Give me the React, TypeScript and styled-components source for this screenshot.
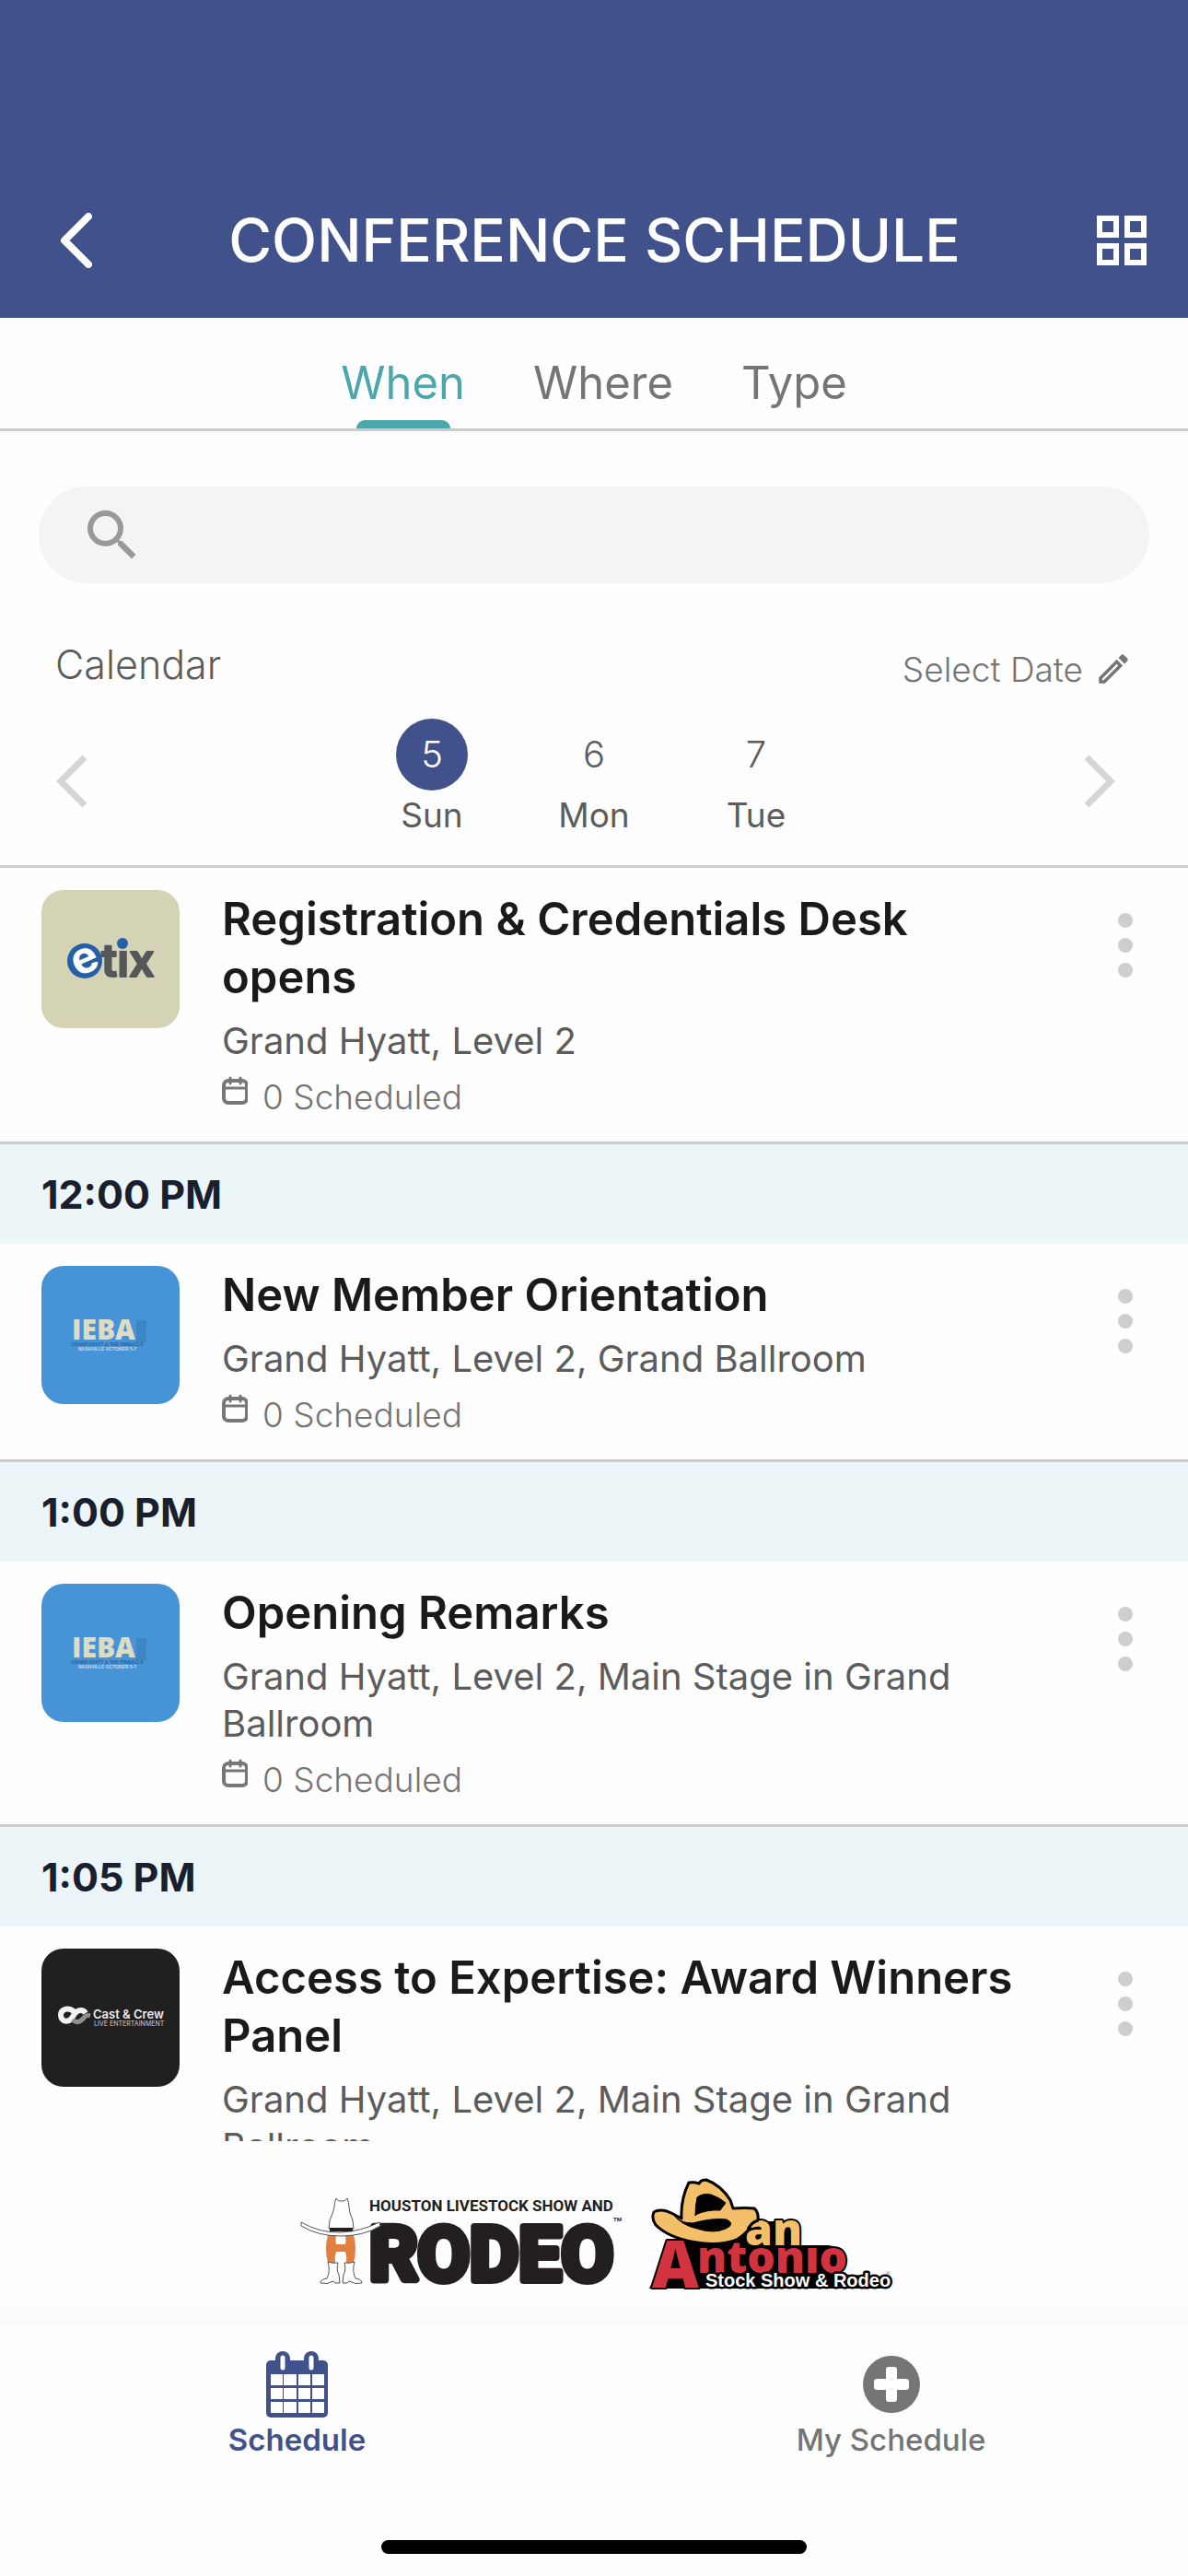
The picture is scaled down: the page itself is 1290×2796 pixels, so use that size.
import React, { useState } from 'react';
import styled, { createGlobalStyle } from 'styled-components';
import { MdOutlineEdit, MdSearch } from 'react-icons/md';

type LogoName = 'ETIX' | 'IEBA' | 'CAST';

type Session = {
  time?: string;
  title: string;
  location: string;
  scheduled: number;
  logo: LogoName;
};

const palette = {
  navy: '#40518b',
  teal: '#4ca7ac',
  line: '#cccccc',
  ink: '#1a1a1a',
  text: '#5c5c5c',
  gray: '#757575',
  timeBg: '#ecf5f7',
};

const tabs = ['When', 'Where', 'Type'];

const days = [
  { date: 5, label: 'Sun' },
  { date: 6, label: 'Mon' },
  { date: 7, label: 'Tue' },
];

const sessions: Session[] = [
  { title: 'Registration & Credentials Desk opens', location: 'Grand Hyatt, Level 2', scheduled: 0, logo: 'ETIX' },
  {
    time: '12:00 PM',
    title: 'New Member Orientation',
    location: 'Grand Hyatt, Level 2, Grand Ballroom',
    scheduled: 0,
    logo: 'IEBA',
  },
  {
    time: '1:00 PM',
    title: 'Opening Remarks',
    location: 'Grand Hyatt, Level 2, Main Stage in Grand Ballroom',
    scheduled: 0,
    logo: 'IEBA',
  },
  {
    time: '1:05 PM',
    title: 'Access to Expertise: Award Winners Panel',
    location: 'Grand Hyatt, Level 2, Main Stage in Grand Ballroom',
    scheduled: 0,
    logo: 'CAST',
  },
];

function ChevronIcon({ flip = false, round = false }: { flip?: boolean; round?: boolean }) {
  return (
    <svg width="36" height="60" viewBox="0 0 36 60" fill="none" stroke="currentColor" aria-hidden="true">
      <path
        d={flip ? 'M4 4L30 30L4 56' : 'M32 4L6 30L32 56'}
        strokeWidth={round ? 8 : 7}
        strokeLinecap={round ? 'round' : 'butt'}
        strokeLinejoin={round ? 'round' : 'miter'}
      />
    </svg>
  );
}

function GridIcon() {
  return (
    <svg width="54" height="54" viewBox="0 0 54 54" fill="none" stroke="currentColor" strokeWidth="6" aria-hidden="true">
      <path d="M3 3h18v18H3zM33 3h18v18H33zM3 33h18v18H3zM33 33h18v18H33z" />
    </svg>
  );
}

function SmallCalendarIcon() {
  return (
    <svg width="28" height="32" viewBox="0 0 28 32" fill="none" stroke="#777777" strokeWidth="4" aria-hidden="true">
      <rect x="2" y="6" width="25" height="24" rx="5" />
      <path d="M2 14h25" strokeWidth="3" />
      <path d="M9 3v6M20 3v6" strokeWidth="3" strokeLinecap="round" />
    </svg>
  );
}

function CalendarIcon() {
  return (
    <svg width="68" height="72" viewBox="0 0 68 72" aria-hidden="true">
      <rect y="10" width="67" height="62" rx="5" fill="currentColor" />
      <rect x="10" width="16" height="25" rx="8" fill="currentColor" />
      <rect x="41" width="16" height="25" rx="8" fill="currentColor" />
      <path d="M18 7v11M49 7v11" stroke="#ffffff" strokeWidth="5" strokeLinecap="round" />
      {[5, 19, 35, 50].map((x) =>
        [25, 40, 55].map((y) => <rect key={`${x}_${y}`} x={x} y={y} width={x === 19 ? 14 : 13} height="12" fill="#ffffff" />),
      )}
    </svg>
  );
}

function PlusCircleIcon() {
  return (
    <svg width="62" height="72" viewBox="0 0 62 72" aria-hidden="true">
      <circle cx="31" cy="36" r="31" fill="currentColor" />
      <path
        d="M28 17h6q3 0 3 3v10h10q3 0 3 3v6q0 3-3 3H37v10q0 3-3 3h-6q-3 0-3-3V42H15q-3 0-3-3v-6q0-3 3-3h10V20q0-3 3-3z"
        fill="#ffffff"
      />
    </svg>
  );
}

function DotsIcon() {
  return (
    <svg width="16" height="70" viewBox="0 0 16 70" fill="#cecece" aria-hidden="true">
      <circle cx="8" cy="8" r="8" />
      <circle cx="8" cy="35" r="8" />
      <circle cx="8" cy="62" r="8" />
    </svg>
  );
}

function EtixLogo() {
  return (
    <svg viewBox="0 0 150 150" role="img" aria-label="etix">
      <rect width="150" height="150" fill="#d5d3b5" />
      <circle cx="47" cy="77" r="19" fill="#2360a5" />
      <g fontFamily="Inter, sans-serif">
        <text x="33" y="90" fontSize="48" fontWeight="700" fill="#ffffff" transform="rotate(-24 47 77)">
          e
        </text>
        <text x="65" y="94" fontSize="49" fontWeight="600" fill="#56575a" stroke="#56575a" strokeWidth="2" strokeLinejoin="round">
          tıx
        </text>
      </g>
      <circle cx="88" cy="58" r="6" fill="#2360a5" />
    </svg>
  );
}

function IebaLogo() {
  return (
    <svg viewBox="0 0 150 150" role="img" aria-label="IEBA">
      <rect width="150" height="150" fill="#4793d8" />
      <rect x="103" y="59" width="11" height="24" fill="#3d86c4" />
      <text x="33" y="80" fontFamily="'Open Sans', sans-serif" fontSize="30" fontWeight="800" fill="#dfdcc4">
        IEBA
      </text>
      <g fontFamily="Liberation Sans, sans-serif" fontWeight="700">
        <text x="32" y="87" fontSize="5" fill="#29649a">
          GRAND HYATT &amp; THE PINNACLE
        </text>
        <text x="40" y="92" fontSize="5" fill="#c5dcec">
          NASHVILLE OCTOBER 5-7
        </text>
      </g>
    </svg>
  );
}

function CastLogo() {
  return (
    <svg viewBox="0 0 150 150" role="img" aria-label="Cast & Crew Live Entertainment">
      <rect width="150" height="150" fill="#221f20" />
      <path d="M35 68C29 63 21 66 21 72C21 80 30 81 34 74C38 66 45 65 48 70" fill="none" stroke="#f2f2f2" strokeWidth="6" />
      <path d="M34 77C39 83 45 77 47 74C49 72 50 72 53 73" fill="none" stroke="#8f8f8f" strokeWidth="5" />
      <g fontFamily="Inter, sans-serif" fill="#ededed">
        <text x="56" y="76" fontSize="13" fontWeight="600">
          Cast &amp; Crew
        </text>
        <text x="57" y="84" fontSize="7" fontWeight="500" fill="#b5b5b5">
          LIVE ENTERTAINMENT
        </text>
      </g>
    </svg>
  );
}

function HoustonLogo() {
  return (
    <svg width="370" height="150" viewBox="-10 -20 370 150" role="img" aria-label="Houston Livestock Show and Rodeo">
      <g fontFamily="Roboto, sans-serif" fontWeight="700" fill="#231f20">
        <text x="81" y="30" fontSize="17">
          HOUSTON LIVESTOCK SHOW AND
        </text>
        <text x="81" y="105" fontSize="82" stroke="#231f20" strokeWidth="8" strokeLinejoin="round">
          RODEO
        </text>
        <text x="346" y="41" fontSize="6">
          TM
        </text>
      </g>
      <path d="M36 56h9q-1 6 0 10h10q1-4 0-10h9q4 15 0 30h-8q1-6-1-12H45q-2 6-1 12h-8q-4-15 0-30z" fill="#e08140" />
      <g fill="#ffffff" stroke="#555555" strokeWidth="1">
        <path d="M45 16q2 4 6 3q4 1 6-3q2 4 2 10q0 5 4 14l1 9H37l1-9q4-9 5-14q0-6 2-10z" />
        <path d="M7 42q21 12 43 11q22-1 42-11l1 4q-18 11-43 11Q25 57 7 46z" />
        <path d="M36 85q5 2 11 1q-2 8 1 13l1 9h-5l-2-2q-7 4-14 2q0-4 7-5q4-8 1-18z" />
        <path d="M54 86q6 1 11-1q-3 10 1 18q7 1 7 5q-7 2-14-2l-2 2h-5l1-9q3-5 1-13z" />
      </g>
      <path d="M38 48h25v4H38z" fill="#231f20" />
    </svg>
  );
}

function SanAntonioLogo() {
  return (
    <svg width="285" height="140" viewBox="0 0 285 140" role="img" aria-label="San Antonio Stock Show & Rodeo">
      <path d="M10 129L34 78L70 70L120 56H172V82H205Q219 84 219 98Q219 108 212 113L262 116Q272 129 258 129z" fill="#000000" />
      <g fontFamily="'Open Sans', sans-serif" fontWeight="800" stroke="#000000" strokeWidth="4" strokeLinejoin="round" paintOrder="stroke">
        <text x="13" y="128" fontSize="70" fill="#d2343f">
          A
        </text>
        <text x="62" y="112" fontSize="48" fill="#d2343f">
          ntonıo
        </text>
        <text x="114" y="82" fontSize="48" fill="#f3bf69">
          an
        </text>
      </g>
      <text
        x="71"
        y="127"
        fontFamily="Liberation Sans, sans-serif"
        fontSize="20"
        fontWeight="700"
        fill="#ffffff"
        stroke="#000000"
        strokeWidth="5"
        strokeLinejoin="round"
        paintOrder="stroke"
      >
        Stock Show &amp; Rodeo
      </text>
      <text x="267" y="115" fontFamily="Liberation Sans, sans-serif" fontSize="6" fill="#555555">
        ®
      </text>
      <g stroke="#000000" strokeWidth="3" strokeLinejoin="round">
        <path
          d="M45 53C44 35 48 24 53 14Q59 13 64 15Q66 11 72 11Q88 17 98 33L101 42Q114 41 124 42Q129 46 128 55Q119 58 117 66Q113 71 105 76C80 86 35 78 17 60Q12 53 15 46Q23 41 36 48z"
          fill="#f3bf69"
        />
        <path d="M60 50Q60 38 62 30Q68 25 77 27Q86 30 93 36Q90 40 87 44Q73 43 60 49z" fill="#000000" strokeWidth="1" />
        <path d="M36 48Q42 58 57 58Q79 52 94 54Q104 59 93 64Q80 70 62 64Q44 60 36 48z" fill="#000000" strokeWidth="1" />
      </g>
    </svg>
  );
}

const logos: Record<LogoName, () => React.JSX.Element> = {
  ETIX: EtixLogo,
  IEBA: IebaLogo,
  CAST: CastLogo,
};

function SessionRow({ session }: { session: Session }) {
  const { time, title, location, scheduled, logo } = session;
  const Logo = logos[logo];
  return (
    <li>
      {time && <TimeHeading>{time}</TimeHeading>}
      <SessionBox>
        <Thumbnail>
          <Logo />
        </Thumbnail>
        <SessionInfo>
          <SessionTitle>{title}</SessionTitle>
          <LocationText>{location}</LocationText>
          <ScheduledLine>
            <SmallCalendarIcon />
            <span>{scheduled} Scheduled</span>
          </ScheduledLine>
        </SessionInfo>
        <MoreButton type="button" aria-label={`Options for ${title}`}>
          <DotsIcon />
        </MoreButton>
      </SessionBox>
    </li>
  );
}

function App() {
  const [activeTab, setActiveTab] = useState('When');
  const [selectedDate, setSelectedDate] = useState(5);

  return (
    <Screen>
      <GlobalStyle />
      <Header>
        <IconButton type="button" aria-label="Back">
          <ChevronIcon round />
        </IconButton>
        <PageTitle>CONFERENCE SCHEDULE</PageTitle>
        <IconButton type="button" aria-label="Menu">
          <GridIcon />
        </IconButton>
      </Header>
      <TabBar role="tablist">
        {tabs.map((tab) => (
          <Tab key={tab} type="button" role="tab" aria-selected={tab === activeTab} $active={tab === activeTab} onClick={() => setActiveTab(tab)}>
            {tab}
          </Tab>
        ))}
      </TabBar>
      <SearchBox>
        <MdSearch size={72} color="#999999" aria-hidden="true" />
        <SearchInput type="search" aria-label="Search sessions" />
      </SearchBox>
      <CalendarHead>
        <CalendarLabel>Calendar</CalendarLabel>
        <SelectDateButton type="button">
          Select Date
          <MdOutlineEdit size={42} aria-hidden="true" />
        </SelectDateButton>
      </CalendarHead>
      <DateStrip>
        <ArrowButton type="button" aria-label="Previous dates">
          <ChevronIcon />
        </ArrowButton>
        <Days>
          {days.map(({ date, label }) => (
            <DayButton key={date} type="button" onClick={() => setSelectedDate(date)}>
              <DayNumber $selected={date === selectedDate}>{date}</DayNumber>
              <DayLabel>{label}</DayLabel>
            </DayButton>
          ))}
        </Days>
        <ArrowButton type="button" aria-label="Next dates">
          <ChevronIcon flip />
        </ArrowButton>
      </DateStrip>
      <SessionList>
        {sessions.map((session) => (
          <SessionRow key={session.title} session={session} />
        ))}
      </SessionList>
      <Sponsors>
        <HoustonLogo />
        <SanAntonioLogo />
      </Sponsors>
      <BottomNav>
        <NavLink href="#schedule" $active>
          <CalendarIcon />
          Schedule
        </NavLink>
        <NavLink href="#my-schedule">
          <PlusCircleIcon />
          My Schedule
        </NavLink>
      </BottomNav>
      <HomeIndicator />
    </Screen>
  );
}

const GlobalStyle = createGlobalStyle`
  * {
    box-sizing: border-box;
  }
  body {
    margin: 0;
    background-color: #ffffff;
    font-family: Inter, 'Open Sans', sans-serif;
  }
  button {
    padding: 0;
    border: none;
    background: none;
    color: inherit;
    font-family: inherit;
    cursor: pointer;
  }
  svg {
    display: block;
    flex-shrink: 0;
  }
`;

const Screen = styled.div`
  display: flex;
  flex-direction: column;
  height: 100vh;
  background-color: #fefefe;
`;

const Header = styled.header`
  display: flex;
  align-items: center;
  justify-content: space-between;
  padding: 177px 45px 0 64px;
  height: 345px;
  flex-shrink: 0;
  background-color: ${palette.navy};
  color: #ffffff;
`;

const IconButton = styled.button`
  display: flex;
`;

const PageTitle = styled.h1`
  margin: 0;
  font-size: 64px;
  font-weight: 500;
  line-height: 72px;
`;

const TabBar = styled.div`
  display: flex;
  justify-content: center;
  gap: 74px;
  flex-shrink: 0;
  border-bottom: 3px solid ${palette.line};
`;

const Tab = styled.button<{ $active: boolean }>`
  position: relative;
  padding-top: 20px;
  height: 120px;
  font-size: 49px;
  color: ${({ $active }) => ($active ? palette.teal : palette.gray)};

  &::after {
    content: '';
    display: ${({ $active }) => ($active ? 'block' : 'none')};
    position: absolute;
    bottom: 0;
    left: 50%;
    width: 102px;
    height: 9px;
    margin-left: -51px;
    border-radius: 9px 9px 0 0;
    background-color: ${palette.teal};
  }
`;

const SearchBox = styled.label`
  display: flex;
  align-items: center;
  margin: 60px 42px 0;
  padding: 0 44px;
  height: 105px;
  flex-shrink: 0;
  border-radius: 52px;
  background-color: #f4f4f4;
`;

const SearchInput = styled.input`
  flex: 1;
  border: none;
  outline: none;
  background: none;
  font-family: inherit;
  font-size: 40px;
`;

const CalendarHead = styled.div`
  display: flex;
  align-items: flex-end;
  justify-content: space-between;
  margin-top: 60px;
  padding: 0 60px;
  flex-shrink: 0;
`;

const CalendarLabel = styled.h2`
  margin: 0;
  font-size: 43px;
  font-weight: 300;
  line-height: 56px;
  color: ${palette.text};
`;

const SelectDateButton = styled.button`
  display: flex;
  gap: 12px;
  font-size: 37px;
  font-weight: 300;
  line-height: 44px;
  color: ${palette.gray};
`;

const DateStrip = styled.div`
  display: flex;
  align-items: center;
  justify-content: space-between;
  margin-top: 8px;
  padding: 23px 60px 31px;
  flex-shrink: 0;
  border-bottom: 3px solid ${palette.line};
`;

const ArrowButton = styled.button`
  width: 54px;
  padding-top: 8px;
  color: #d6d6d6;
`;

const Days = styled.div`
  display: flex;
`;

const DayButton = styled.button`
  display: flex;
  flex-direction: column;
  align-items: center;
  gap: 4px;
  width: 176px;
  color: ${palette.text};
`;

const DayNumber = styled.span<{ $selected: boolean }>`
  width: 78px;
  height: 78px;
  border-radius: 50%;
  font-size: 40px;
  font-weight: 300;
  line-height: 78px;
  background-color: ${({ $selected }) => ($selected ? palette.navy : 'transparent')};
  color: ${({ $selected }) => ($selected ? '#ffffff' : palette.text)};
`;

const DayLabel = styled.span`
  font-size: 37px;
  line-height: 46px;
`;

const SessionList = styled.ul`
  flex: 1;
  min-height: 0;
  margin: 0;
  padding: 0;
  list-style: none;
  overflow-y: auto;
  scrollbar-width: none;
`;

const TimeHeading = styled.h2`
  margin: 0;
  padding: 0 45px;
  font-size: 43px;
  font-weight: 700;
  line-height: 108px;
  background-color: ${palette.timeBg};
  color: #1a1f2e;
`;

const SessionBox = styled.article`
  display: flex;
  align-items: flex-start;
  padding: 24px 60px 24px 45px;
  border-bottom: 3px solid ${palette.line};
`;

const Thumbnail = styled.div`
  width: 150px;
  height: 150px;
  flex-shrink: 0;
  border-radius: 24px;
  overflow: hidden;
`;

const SessionInfo = styled.div`
  flex: 1;
  padding-left: 46px;
`;

const SessionTitle = styled.h3`
  margin: 0;
  font-size: 49px;
  font-weight: 600;
  line-height: 63px;
  color: ${palette.ink};
`;

const LocationText = styled.p`
  margin: 12px 0;
  font-size: 40px;
  line-height: 51px;
  color: ${palette.text};
`;

const ScheduledLine = styled.div`
  display: flex;
  gap: 16px;
  font-size: 37px;
  font-weight: 300;
  line-height: 48px;
  color: ${palette.gray};
`;

const MoreButton = styled.button`
  display: flex;
  justify-content: flex-end;
  width: 116px;
  padding-top: 25px;
`;

const Sponsors = styled.div`
  display: flex;
  align-items: center;
  justify-content: center;
  gap: 15px;
  height: 202px;
  flex-shrink: 0;
  background: linear-gradient(to bottom, #fefefe 85%, #fafafa);
`;

const BottomNav = styled.nav`
  display: grid;
  grid-template-columns: 1fr 1fr;
  padding-top: 26px;
  flex-shrink: 0;
`;

const NavLink = styled.a<{ $active?: boolean }>`
  display: flex;
  flex-direction: column;
  align-items: center;
  gap: 4px;
  font-size: 33px;
  font-weight: ${({ $active }) => ($active ? 600 : 500)};
  line-height: 40px;
  text-decoration: none;
  color: ${({ $active }) => ($active ? palette.navy : palette.gray)};
`;

const HomeIndicator = styled.div`
  width: 462px;
  height: 15px;
  margin: 89px auto 24px;
  flex-shrink: 0;
  border-radius: 8px;
  background-color: #000000;
`;

export default App;
